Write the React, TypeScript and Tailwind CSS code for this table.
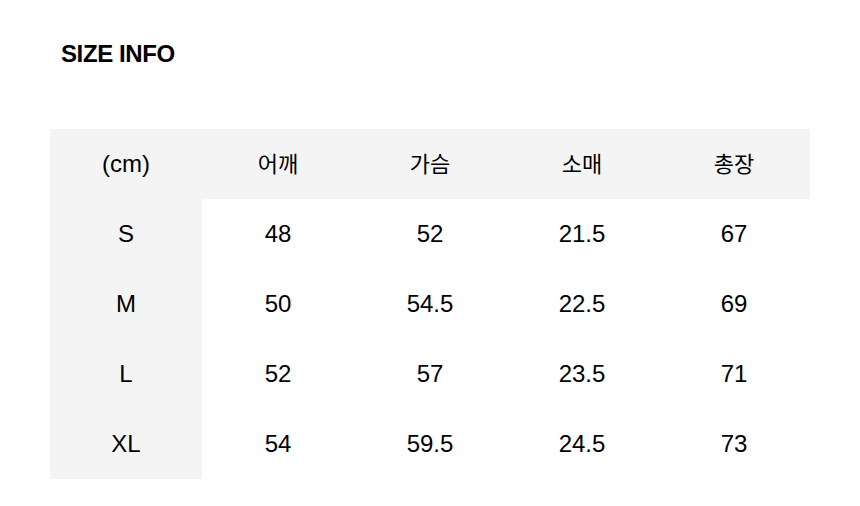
const headers = ["(cm)", "어깨", "가슴", "소매", "총장"]

const rows = [
  ["S", "48", "52", "21.5", "67"],
  ["M", "50", "54.5", "22.5", "69"],
  ["L", "52", "57", "23.5", "71"],
  ["XL", "54", "59.5", "24.5", "73"],
]

export default function App() {
  return (
    <div
      className="min-h-screen w-[860px] bg-white px-[50px] pt-[40px] text-black"
      style={{ fontFamily: '"Liberation Sans", "Noto Sans CJK KR", sans-serif' }}
    >
      <h2 className="pl-[11px] text-[24px] font-bold leading-[28px] tracking-[-0.4px]">SIZE INFO</h2>

      <div className="mt-[61px] w-[760px]">
        <div className="grid grid-cols-5 bg-[#f4f4f4]">
          {headers.map((h, i) => (
            <div
              key={h}
              className={`flex h-[70px] items-center justify-center ${i === 0 ? "text-[24px]" : "text-[22px]"}`}
            >
              {h}
            </div>
          ))}
        </div>
        {rows.map((row) => (
          <div key={row[0]} className="grid grid-cols-5">
            {row.map((cell, i) => (
              <div
                key={i}
                className={`flex h-[70px] items-center justify-center text-[24px] ${i === 0 ? "bg-[#f4f4f4]" : ""}`}
              >
                {cell}
              </div>
            ))}
          </div>
        ))}
      </div>
    </div>
  )
}
